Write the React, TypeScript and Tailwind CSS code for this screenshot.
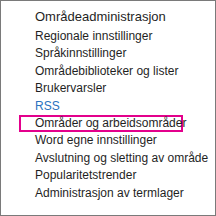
const items = [
  "Regionale innstillinger",
  "Språkinnstillinger",
  "Områdebiblioteker og lister",
  "Brukervarsler",
  "RSS",
  "Områder og arbeidsområder",
  "Word egne innstillinger",
  "Avslutning og sletting av område",
  "Popularitetstrender",
  "Administrasjon av termlager",
]

export default function App() {
  return (
    <div
      className="w-[216px] h-[216px] overflow-hidden bg-white border border-[#7a7a7a] pl-[34px] pt-[7px] text-[#1f1f1f] whitespace-nowrap"
      style={{ fontFamily: '"Liberation Sans", Arial, sans-serif' }}
    >
      <div className="text-[13px] leading-[17px]">Områdeadministrasjon</div>
      <div className="mt-[3px] flex flex-col text-[12px] leading-[17.4px]">
        {items.map((item) => {
          if (item === "RSS") {
            return (
              <div key={item} className="text-[#2a72c0]">
                {item}
              </div>
            )
          }
          if (item === "Områder og arbeidsområder") {
            return (
              <div
                key={item}
                className="-ml-[16px] w-[164px] pl-[16px] ring-2 ring-inset ring-[#e3008c]"
              >
                {item}
              </div>
            )
          }
          return <div key={item}>{item}</div>
        })}
      </div>
    </div>
  )
}
